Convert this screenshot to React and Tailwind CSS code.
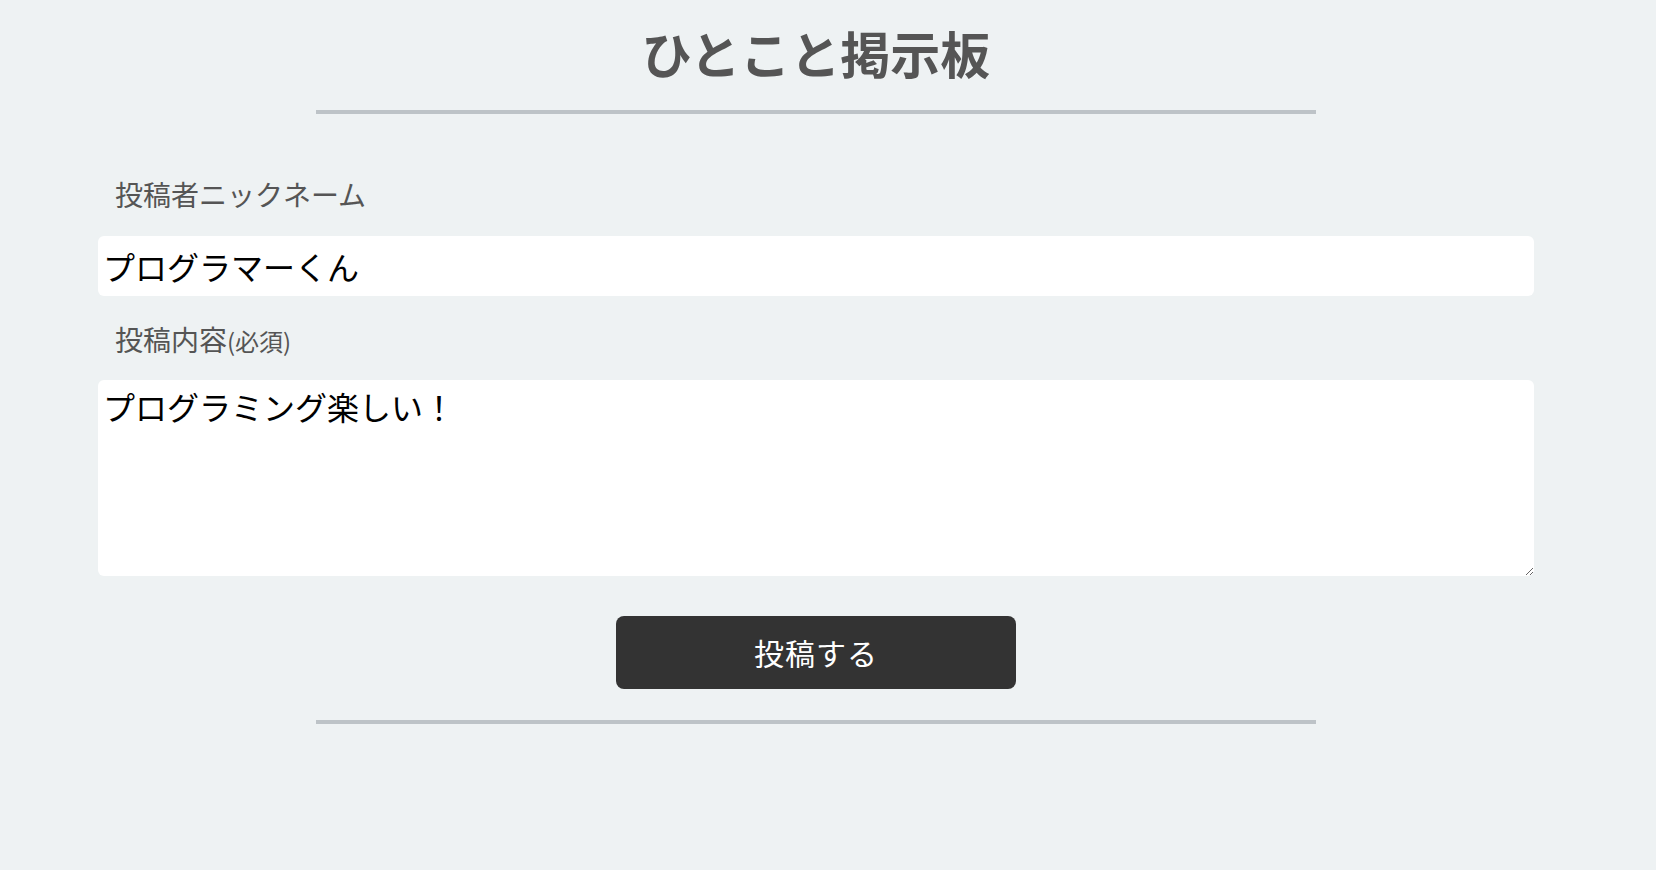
import React from "react";

export default function App() {
  return (
    <div className="min-h-screen bg-[#eef2f3] font-['Noto_Sans_CJK_JP','Noto_Sans',sans-serif]">
      <div className="w-[1632px] flex flex-col items-center">
        <h1 className="mt-[16px] text-[50px] leading-[72px] font-bold text-[#555555]">
          ひとこと掲示板
        </h1>
        <div className="mt-[22px] w-[1000px] h-[4px] bg-[#bdc3c7]" />
        <form className="w-[88%] flex flex-col" onSubmit={(e) => e.preventDefault()}>
          <label className="mt-[60px] pl-[17px] text-[28px] leading-[40px] text-[#555555]">
            投稿者ニックネーム
          </label>
          <input
            className="mt-[22px] block w-full h-[60px] bg-white rounded-[6px] px-[5px] text-[32px] text-black outline-none"
            defaultValue="プログラマーくん"
          />
          <label className="mt-[23px] pl-[17px] text-[28px] leading-[40px] text-[#555555]">
            投稿内容<span className="text-[24px]">(必須)</span>
          </label>
          <textarea
            className="mt-[19px] block w-full h-[196px] bg-white rounded-[6px] px-[5px] pt-[4px] text-[32px] leading-[44px] text-black outline-none"
            defaultValue="プログラミング楽しい！"
          />
          <div className="flex justify-center">
            <button
              type="submit"
              className="mt-[40px] w-[400px] h-[73px] bg-[#333333] rounded-[8px] text-white text-[30px] tracking-[1px]"
            >
              投稿する
            </button>
          </div>
        </form>
        <div className="mt-[31px] w-[1000px] h-[4px] bg-[#bdc3c7]" />
      </div>
    </div>
  );
}
